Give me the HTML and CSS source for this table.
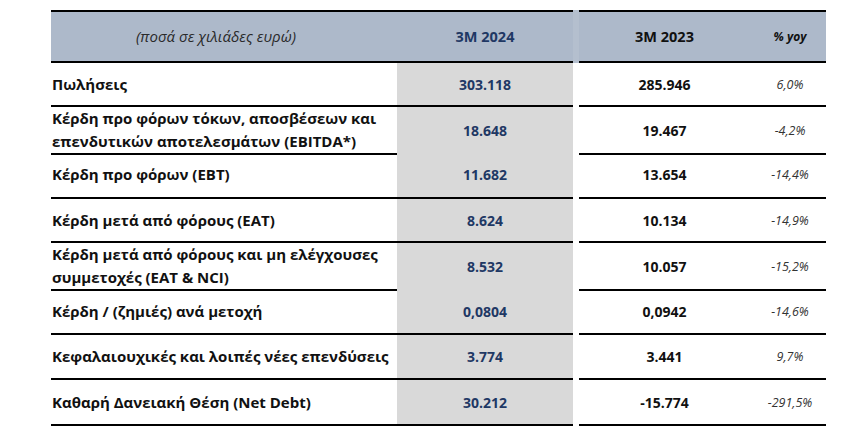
FILE: index.html
```html
<!DOCTYPE html>
<html lang="el">
<head>
<meta charset="utf-8">
<title>Αποτελέσματα 3M 2024</title>
<link rel="stylesheet" href="styles.css">
</head>
<body>
<div class="table">
  <div class="row head">
    <div class="cell label-h">(ποσά σε χιλιάδες ευρώ)</div>
    <div class="cell cur-h">3M 2024</div>
    <div class="gap"></div>
    <div class="cell prev-h">3M 2023</div>
    <div class="cell yoy-h">% yoy</div>
  </div>
  <div class="row r44">
    <div class="cell label">Πωλήσεις</div>
    <div class="cell cur">303.118</div>
    <div class="gap"></div>
    <div class="cell prev">285.946</div>
    <div class="cell yoy">6,0%</div>
  </div>
  <div class="row r45">
    <div class="cell label">Κέρδη προ φόρων τόκων, αποσβέσεων και επενδυτικών αποτελεσμάτων (EBITDA*)</div>
    <div class="cell cur">18.648</div>
    <div class="gap"></div>
    <div class="cell prev">19.467</div>
    <div class="cell yoy">-4,2%</div>
  </div>
  <div class="row r47">
    <div class="cell label">Κέρδη προ φόρων (EBT)</div>
    <div class="cell cur">11.682</div>
    <div class="gap"></div>
    <div class="cell prev">13.654</div>
    <div class="cell yoy">-14,4%</div>
  </div>
  <div class="row r44">
    <div class="cell label">Κέρδη μετά από φόρους (EAT)</div>
    <div class="cell cur">8.624</div>
    <div class="gap"></div>
    <div class="cell prev">10.134</div>
    <div class="cell yoy">-14,9%</div>
  </div>
  <div class="row r46">
    <div class="cell label">Κέρδη μετά από φόρους και μη ελέγχουσες συμμετοχές (EAT &amp; NCI)</div>
    <div class="cell cur">8.532</div>
    <div class="gap"></div>
    <div class="cell prev">10.057</div>
    <div class="cell yoy">-15,2%</div>
  </div>
  <div class="row r46">
    <div class="cell label">Κέρδη / (ζημιές) ανά μετοχή</div>
    <div class="cell cur">0,0804</div>
    <div class="gap"></div>
    <div class="cell prev">0,0942</div>
    <div class="cell yoy">-14,6%</div>
  </div>
  <div class="row r45">
    <div class="cell label">Κεφαλαιουχικές και λοιπές νέες επενδύσεις</div>
    <div class="cell cur">3.774</div>
    <div class="gap"></div>
    <div class="cell prev">3.441</div>
    <div class="cell yoy">9,7%</div>
  </div>
  <div class="row r46">
    <div class="cell label">Καθαρή Δανειακή Θέση (Net Debt)</div>
    <div class="cell cur">30.212</div>
    <div class="gap"></div>
    <div class="cell prev">-15.774</div>
    <div class="cell yoy">-291,5%</div>
  </div>
</div>
</body>
</html>
```
FILE: styles.css
```css
html, body {
  margin: 0;
  background: #ffffff;
}
body {
  padding: 10px 0 0 51px;
  font-family: "Open Sans", "Noto Sans", "DejaVu Sans", sans-serif;
  color: #111111;
}
.table {
  width: 775px;
  display: flex;
  flex-direction: column;
}
.row {
  display: grid;
  grid-template-columns: 346px 176px 6px 171px 76px;
}
.r44 { height: 44px; }
.r45 { height: 45px; }
.r46 { height: 46px; }
.r47 { height: 47px; }
.cell {
  display: flex;
  align-items: center;
  justify-content: center;
  border-bottom: 2px solid #000000;
  box-sizing: border-box;
  font-size: 14px;
  font-weight: 700;
  line-height: 23px;
}
.head {
  height: 53px;
  background: #adb9ca;
}
.head .cell {
  border-top: 2px solid #000000;
}
.head .gap {
  background: #b4bfce;
}
.label-h {
  font-size: 15px;
  font-weight: 400;
  font-style: italic;
  color: #2a2a2a;
  padding-right: 16px;
}
.cur-h {
  font-size: 14.5px;
  color: #1f3864;
}
.prev-h {
  font-size: 14.5px;
  color: #111111;
}
.yoy-h {
  font-size: 12px;
  font-style: italic;
  padding-left: 4px;
}
.label {
  justify-content: flex-start;
  padding-left: 1px;
  font-size: 15px;
}
.cur {
  background: #d9d9d9;
  color: #1f3864;
}
.prev {
  color: #111111;
}
.yoy {
  font-size: 12.5px;
  font-weight: 400;
  font-style: italic;
  color: #333333;
  padding-left: 4px;
}
```
